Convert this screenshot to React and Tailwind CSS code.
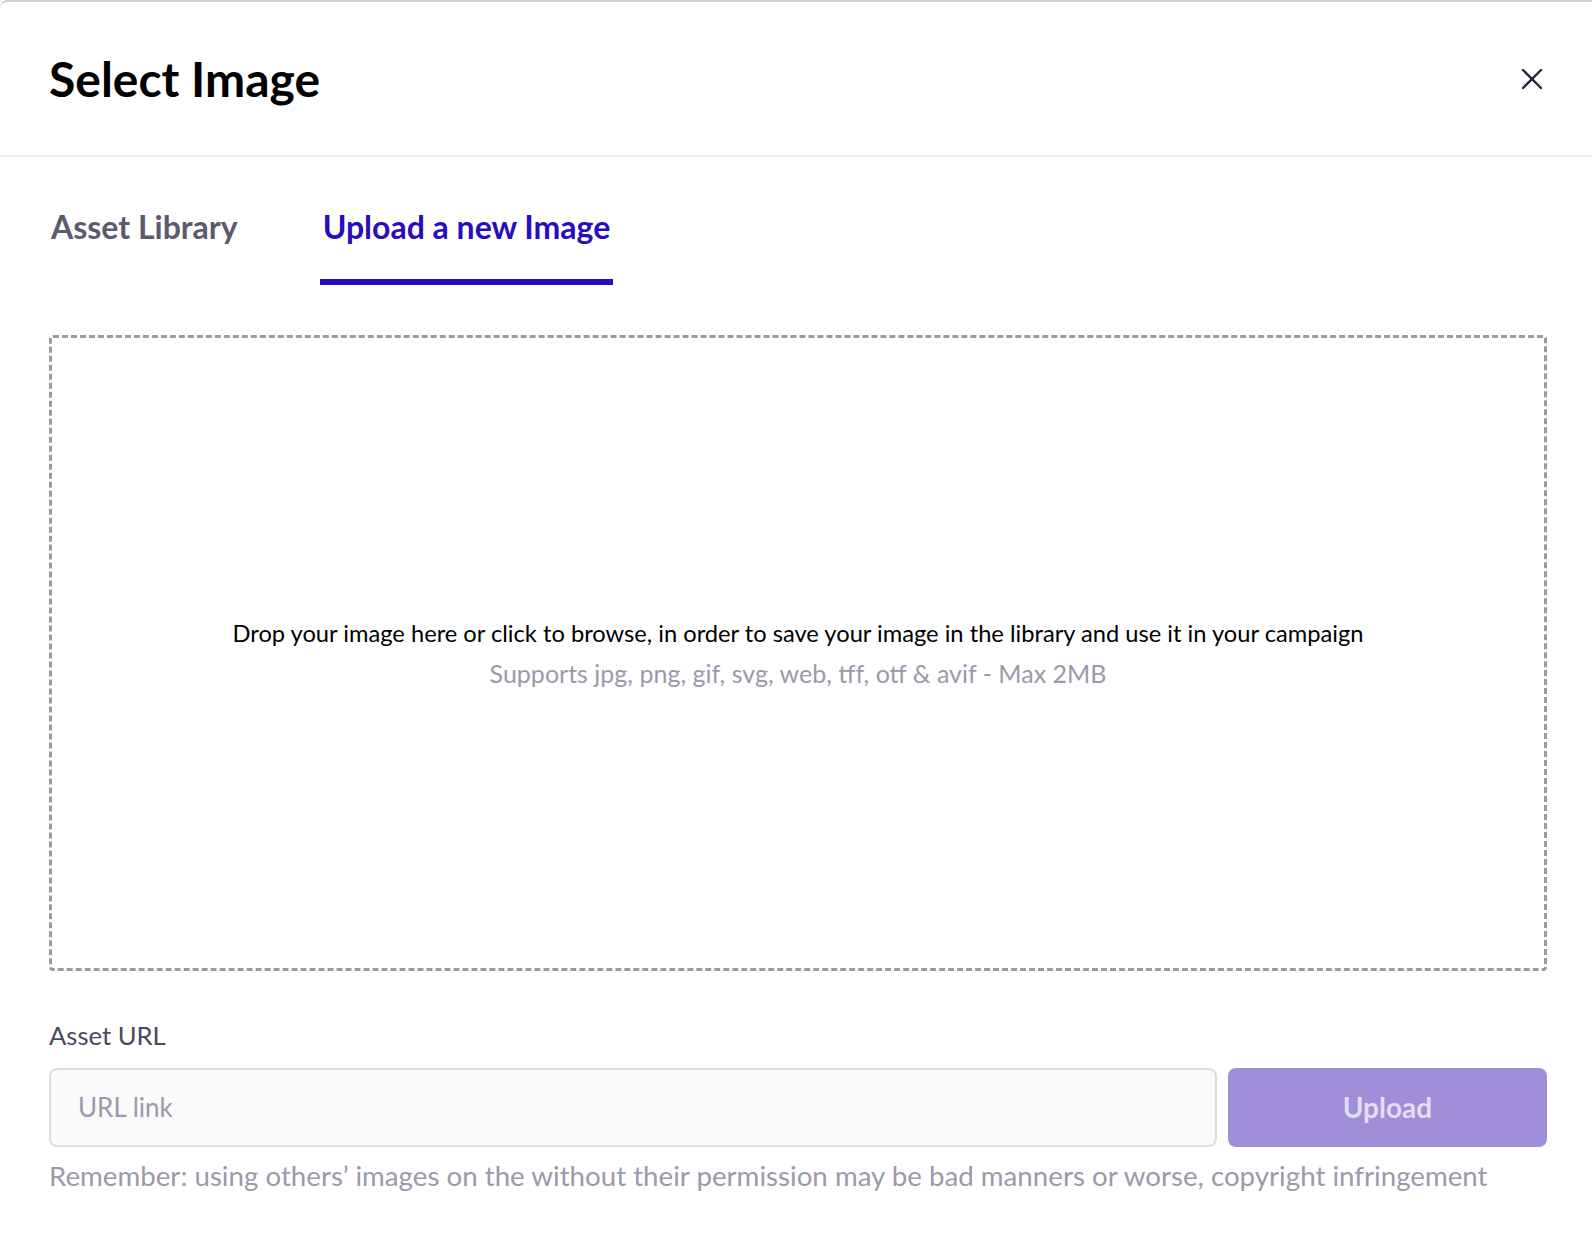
import { useState } from 'react';

function CloseIcon() {
  return (
    <svg width="24" height="24" viewBox="0 0 24 24" fill="none" stroke="currentColor" strokeWidth="2.4" strokeLinecap="round">
      <path d="M3 3L21 21M21 3L3 21" />
    </svg>
  );
}

function App() {
  const [tab, setTab] = useState('upload');
  const [url, setUrl] = useState('');

  return (
    <div className="min-h-screen bg-white font-['Lato','Noto_Sans',sans-serif]">
      <div className="min-h-[1238px] border-t-2 border-[#cfcfd4] rounded-tl-lg bg-white">
        {/* header */}
        <div className="h-[155px] flex items-center justify-between pl-[49px] pr-[48px] border-b-2 border-[#ececf0]">
          <h1 className="text-[48px] font-bold text-black leading-none">Select Image</h1>
          <button className="text-[#24243a]">
            <CloseIcon />
          </button>
        </div>

        <div className="px-[49px] pr-[45px]">
          {/* tabs */}
          <div className="flex gap-[82px] mt-[54px] ml-[2px]">
            <button
              onClick={() => setTab('library')}
              className={`text-[32px] font-bold leading-none pb-[36px] border-b-[6px] ${
                tab === 'library' ? 'text-[#2a0cc0] border-[#2a0cc0]' : 'text-[#5b5a6e] border-transparent'
              }`}
            >
              Asset Library
            </button>
            <button
              onClick={() => setTab('upload')}
              className={`text-[32px] font-bold leading-none pb-[36px] px-[3px] border-b-[6px] ${
                tab === 'upload' ? 'text-[#2a0cc0] border-[#2a0cc0]' : 'text-[#5b5a6e] border-transparent'
              }`}
            >
              Upload a new Image
            </button>
          </div>

          {/* drop zone */}
          <div className="mt-[50px] h-[636px] border-[3px] border-dashed border-[#9a99a6] rounded flex flex-col items-center justify-center text-center cursor-pointer">
            <p className="text-[23.7px] text-black leading-[40px]">
              Drop your image here or click to browse, in order to save your image in the library and use it in your campaign
            </p>
            <p className="text-[25px] text-[#9b9aab] leading-[40px]">
              Supports jpg, png, gif, svg, web, tff, otf &amp; avif - Max 2MB
            </p>
          </div>

          {/* asset url */}
          <div className="mt-[52px]">
            <label className="block text-[25.6px] text-[#4a4a5c] leading-none">Asset URL</label>
            <div className="flex gap-[11px] mt-[19px]">
              <input
                value={url}
                onChange={(e) => setUrl(e.target.value)}
                placeholder="URL link"
                className="flex-1 h-[79px] px-[27px] text-[26px] text-[#24243a] bg-[#fafafa] border-2 border-[#dcdce3] rounded-lg outline-none placeholder:text-[#9a9aab]"
              />
              <button
                disabled={!url.trim()}
                className="w-[319px] h-[79px] rounded-lg bg-[#9f8fd8] text-[#e3ddf5] text-[28px] font-bold"
              >
                Upload
              </button>
            </div>
            <p className="mt-[15px] text-[27.7px] text-[#9a9aab] leading-none">
              Remember: using others’ images on the without their permission may be bad manners or worse, copyright infringement
            </p>
          </div>
        </div>
      </div>
    </div>
  );
}

export default App;
